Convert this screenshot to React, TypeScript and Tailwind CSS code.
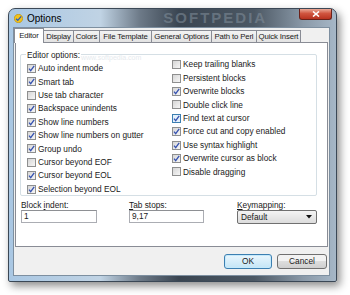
import React from 'react'

const leftOptions: [string, boolean][] = [
  ['Auto indent mode', true],
  ['Smart tab', true],
  ['Use tab character', false],
  ['Backspace unindents', true],
  ['Show line numbers', true],
  ['Show line numbers on gutter', true],
  ['Group undo', true],
  ['Cursor beyond EOF', false],
  ['Cursor beyond EOL', true],
  ['Selection beyond EOL', true],
]

const rightOptions: [string, boolean][] = [
  ['Keep trailing blanks', false],
  ['Persistent blocks', false],
  ['Overwrite blocks', true],
  ['Double click line', false],
  ['Find text at cursor', true],
  ['Force cut and copy enabled', true],
  ['Use syntax highlight', true],
  ['Overwrite cursor as block', true],
  ['Disable dragging', false],
]

const tabs: [string, string][] = [
  ['Display', 'w-[30px]'],
  ['Colors', 'w-[26px]'],
  ['File Template', 'w-[52px]'],
  ['General Options', 'w-[60px]'],
  ['Path to Perl', 'w-[45px]'],
  ['Quick Insert', 'w-[44px]'],
]

function Check({ on, hot }: { on: boolean; hot?: boolean }) {
  return (
    <span
      className={
        hot
          ? 'w-[9px] h-[9px] shrink-0 flex items-center justify-center border border-[#3c7fb1] bg-[#e4f1fb]'
          : 'w-[9px] h-[9px] shrink-0 flex items-center justify-center border border-[#8e8f8f] bg-[linear-gradient(135deg,#d6d6d6,#f6f6f6)]'
      }
    >
      {on && (
        <svg width="7" height="7" viewBox="0 0 7 7">
          <path d="M1 3.6 L2.7 5.6 L6.2 0.9" stroke="#3552b0" strokeWidth="1.3" fill="none" />
        </svg>
      )}
    </span>
  )
}

function Row({ label, on, hot }: { label: string; on: boolean; hot?: boolean }) {
  return (
    <div className="h-[13.4px] flex items-center gap-[2px]">
      <Check on={on} hot={hot} />
      <span className="whitespace-nowrap">{label}</span>
    </div>
  )
}

export default function App() {
  return (
    <div className="w-[350px] h-[295px] bg-white pl-[8px] pt-[8px] overflow-hidden font-['Liberation_Sans',Arial,sans-serif] text-[8.3px] text-[#1a1a1a]">
      <div className="w-[329px] h-[274px] flex flex-col rounded-t-[7px] rounded-b-[2px] border border-[#3b4856] shadow-[3px_4px_9px_rgba(0,0,0,0.45)] bg-[linear-gradient(to_right,#a9c7e3_0%,#c0d3e4_28%,#6d7a88_40%,#3a4551_52%,#4c5864_75%,#8a99a8_90%,#a6b7c7_100%)]">
        {/* title bar */}
        <div className="h-[18px] flex items-center pl-[5px] pr-[4px] overflow-hidden">
          <svg width="9" height="9" viewBox="0 0 9 9" className="shrink-0">
            <circle cx="4.5" cy="4.5" r="4.2" fill="#f2c21b" stroke="#b98a0a" strokeWidth="0.6" />
            <path d="M2 4.8 L3.8 6.4 L7.2 2.4" stroke="#2c5fb8" strokeWidth="1.3" fill="none" />
          </svg>
          <span className="ml-[4px] text-[10px] text-black">Options</span>
          <span className="flex-1 text-center pl-[70px] text-[15px] leading-[18px] font-bold tracking-[2px] text-[#7d8a96] opacity-60">SOFTPEDIA</span>
          <div className="self-start w-[33px] h-[11px] rounded-b-[3px] border border-t-0 border-[#6b2119] bg-[linear-gradient(#eaa997,#d0553f_45%,#b7321f)] flex items-center justify-center">
            <svg width="8" height="6" viewBox="0 0 8 6">
              <path d="M1 0.5 L7 5.5 M7 0.5 L1 5.5" stroke="white" strokeWidth="1.6" />
            </svg>
          </div>
        </div>

        {/* client */}
        <div className="flex-1 pl-[4px] pr-[6px] pb-[5px] flex">
          <div className="w-[317px] bg-[#f0f0f0] border border-[#7d8fa0] flex flex-col">
            {/* tabs */}
            <div className="h-[14px] flex items-end relative z-10 text-[7.8px] tracking-[-0.15px]">
              <div className="w-[30px] h-[15px] -mb-[1px] bg-white border border-b-0 border-[#898c95] flex items-center justify-center">
                Editor
              </div>
              {tabs.map(([name, w]) => (
                <div
                  key={name}
                  className={`${w} h-[12px] border border-l-0 border-b-0 border-[#898c95] bg-[linear-gradient(#f3f3f3,#e2e2e2)] flex items-center justify-center whitespace-nowrap overflow-hidden`}
                >
                  {name}
                </div>
              ))}
            </div>

            {/* panel */}
            <div className="ml-[1px] w-[313px] h-[205px] bg-white border border-[#898c95] pl-[4px] pt-[11px]">
              <div className="relative w-[297px] h-[142px] border border-[#d5dfe5] rounded-[2px] flex">
                <span className="absolute -top-[6px] left-[5px] bg-white px-[1px]">Editor options:</span>
                <span className="absolute -top-[2px] left-[60px] text-[7px] text-[#e6eaee]">www.softpedia.com</span>
                <div className="w-[151px] pl-[6px] pt-[6.8px]">
                  {leftOptions.map(([l, on]) => (
                    <Row key={l} label={l} on={on} />
                  ))}
                </div>
                <div className="pt-[3px]">
                  {rightOptions.map(([l, on]) => (
                    <Row key={l} label={l} on={on} hot={l === 'Find text at cursor'} />
                  ))}
                </div>
              </div>

              <div className="flex ml-[1px] mt-[4px]">
                <div className="w-[108px]">
                  <div className="h-[10px] leading-[10px]">
                    Block <span className="underline">i</span>ndent:
                  </div>
                  <div className="w-[76px] h-[13px] border border-[#abadb3] border-t-[#8e9094] bg-white pl-[2px] leading-[11px]">1</div>
                </div>
                <div className="w-[108px]">
                  <div className="h-[10px] leading-[10px]">
                    <span className="underline">T</span>ab stops:
                  </div>
                  <div className="w-[75px] h-[13px] border border-[#abadb3] border-t-[#8e9094] bg-white pl-[2px] leading-[11px]">9,17</div>
                </div>
                <div className="w-[80px]">
                  <div className="h-[10px] leading-[10px]">
                    <span className="underline">K</span>eymapping:
                  </div>
                  <div className="w-[80px] h-[14px] border border-[#707070] rounded-[2px] bg-[linear-gradient(#f4f4f4,#dcdcdc)] pl-[3px] pr-[4px] flex items-center justify-between">
                    <span>Default</span>
                    <svg width="6" height="4" viewBox="0 0 6 4">
                      <path d="M0 0 H6 L3 3.5 Z" fill="#111" />
                    </svg>
                  </div>
                </div>
              </div>
            </div>

            {/* buttons */}
            <div className="mt-[7px] flex justify-end gap-[5px] pr-[2px]">
              <div className="w-[48px] h-[15px] rounded-[3px] border border-[#3c7fb1] bg-[linear-gradient(#eaf6fd,#c4e5f6)] shadow-[inset_0_0_0_1px_#c5e9fb] flex items-center justify-center">
                OK
              </div>
              <div className="w-[50px] h-[15px] rounded-[3px] border border-[#707070] bg-[linear-gradient(#f2f2f2_50%,#dddddd_50%,#cfcfcf)] flex items-center justify-center">
                Cancel
              </div>
            </div>
          </div>
        </div>
      </div>
    </div>
  )
}
